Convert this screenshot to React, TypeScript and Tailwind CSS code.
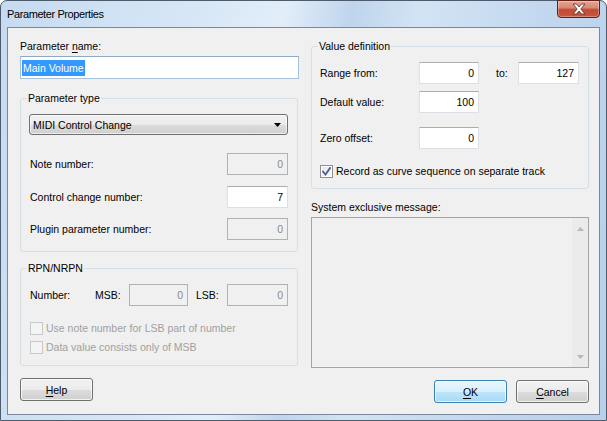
import React from "react";

function CloseButton() {
  return (
    <div className="-mt-[1px] w-[43px] h-[18px] rounded-b-[4px] border border-[#5e2219] bg-[linear-gradient(#e6a596_0%,#d98774_42%,#c24a33_55%,#c9573d_100%)] flex items-center justify-center shadow-[inset_0_0_0_1px_rgba(255,255,255,0.3)]">
      <svg width="16" height="12" viewBox="0 0 16 12">
        <path
          d="M2 1h3.5L8 4l2.5-3H14l-4.2 5L14 11h-3.5L8 8l-2.5 3H2l4.2-5z"
          fill="#ffffff"
          stroke="#5a3a36"
          strokeWidth="0.9"
          strokeLinejoin="round"
        />
      </svg>
    </div>
  );
}

function Field({ value, cls, disabled }: { value: string; cls: string; disabled?: boolean }) {
  return (
    <div
      className={
        "h-[22px] flex items-center justify-end pr-[4px] " +
        cls +
        (disabled
          ? " border border-[#adb2b5] bg-[#f0f0f0] text-[#8a8a8a]"
          : " border border-[#dbdfe6] border-t-[#abadb3] bg-white text-black")
      }
    >
      {value}
    </div>
  );
}

function Check({ label, checked, disabled }: { label: string; checked?: boolean; disabled?: boolean }) {
  return (
    <div className="flex items-center h-[14px]">
      {checked ? (
        <span className="w-[13px] h-[13px] border border-[#8e8f8f] bg-[linear-gradient(135deg,#e6e6e6,#fafafa)] shadow-[inset_0_0_0_1px_#ffffff] flex items-center justify-center">
          <svg width="9" height="9" viewBox="0 0 9 9">
            <path d="M1 4.5L3.5 7.5L8 1" fill="none" stroke="#4a5f97" strokeWidth="1.8" strokeLinecap="square" />
          </svg>
        </span>
      ) : (
        <span className="w-[13px] h-[13px] border border-[#c8c8c8] bg-[#f4f4f4]" />
      )}
      <span className={"ml-[3px] " + (disabled ? "text-[#a0a0a0]" : "text-black")}>{label}</span>
    </div>
  );
}

function Button({ children, primary, cls }: { children: React.ReactNode; primary?: boolean; cls: string }) {
  return (
    <div
      className={
        "h-[23px] rounded-[3px] border flex items-center justify-center shadow-[inset_0_0_0_1px_rgba(255,255,255,0.7)] " +
        cls +
        (primary
          ? " border-[#3c7fb1] bg-[linear-gradient(#eaf6fd_0%,#d9f0fc_50%,#bee6fd_50%,#a7d9f5_100%)]"
          : " border-[#707070] bg-[linear-gradient(#f2f2f2_0%,#ebebeb_50%,#dddddd_50%,#cfcfcf_100%)]")
      }
    >
      {children}
    </div>
  );
}

export default function App() {
  return (
    <div className="w-[607px] h-[421px] overflow-hidden font-['Liberation_Sans',Arial,sans-serif] text-[10.5px] leading-[14px] text-black">
      <div className="w-full h-full flex flex-col px-[6px] pb-[5px] border border-[#4d5b6c] rounded-t-[7px] bg-[linear-gradient(100deg,#c6dbf1_0%,#d6e6f6_28%,#e2edf9_42%,#bfd5ed_52%,#d2e3f4_62%,#c3d8ef_80%,#b8d0ea_100%)]">
        <div className="h-[26px] flex justify-between">
          <div className="pt-[6px] text-[11px] tracking-[-0.4px]">Parameter Properties</div>
          <CloseButton />
        </div>
        <div className="flex-1 bg-[#f0f0f0] border border-[#7b8899] flex pl-[12px] pr-[10px] pt-[11px] gap-[12px]">
          {/* Left column */}
          <div className="w-[279px] flex flex-col">
            <div>
              Parameter <span className="underline underline-offset-[2px]">n</span>ame:
            </div>
            <div className="mt-[3px] h-[23px] border border-[#a9c0da] border-t-[#8fa9c6] bg-white flex items-center pl-[1px]">
              <span className="bg-[#3399ff] text-white px-[1px] leading-[16px]">Main Volume</span>
            </div>

            <fieldset className="mt-[12px] w-[278px] border border-[#d5dfe5] rounded-[3px]">
              <legend className="ml-[6px] px-[1px] leading-[14px]">Parameter type</legend>
              <div className="pl-[8px] pr-[9px] pb-[11px] flex flex-col">
                <div className="mt-[9px] h-[21px] w-[259px] rounded-[3px] border border-[#707070] bg-[linear-gradient(#f2f2f2_0%,#ebebeb_50%,#dddddd_50%,#cfcfcf_100%)] shadow-[inset_0_0_0_1px_rgba(255,255,255,0.6)] flex items-center justify-between pl-[3px] pr-[6px]">
                  <span>MIDI Control Change</span>
                  <svg width="7" height="4" viewBox="0 0 7 4">
                    <path d="M0 0h7L3.5 4z" fill="#000" />
                  </svg>
                </div>
                <div className="mt-[18px] flex items-center justify-between pl-[1px]">
                  <span>Note number:</span>
                  <Field value="0" cls="w-[61px]" disabled />
                </div>
                <div className="mt-[11px] flex items-center justify-between pl-[1px]">
                  <span>Control change number:</span>
                  <Field value="7" cls="w-[61px]" />
                </div>
                <div className="mt-[10px] flex items-center justify-between pl-[1px]">
                  <span>Plugin parameter number:</span>
                  <Field value="0" cls="w-[61px]" disabled />
                </div>
              </div>
            </fieldset>

            <fieldset className="mt-[9px] w-[278px] border border-[#d5dfe5] rounded-[3px]">
              <legend className="ml-[6px] px-[1px] leading-[14px]">RPN/NRPN</legend>
              <div className="pl-[8px] pr-[9px] pb-[11px] flex flex-col">
                <div className="mt-[9px] flex items-center pl-[1px]">
                  <span className="w-[65px]">Number:</span>
                  <span className="w-[34px]">MSB:</span>
                  <Field value="0" cls="w-[59px]" disabled />
                  <span className="ml-[8px] w-[31px]">LSB:</span>
                  <Field value="0" cls="w-[61px]" disabled />
                </div>
                <div className="mt-[15px] pl-[1px]">
                  <Check label="Use note number for LSB part of number" disabled />
                </div>
                <div className="mt-[5px] pl-[1px]">
                  <Check label="Data value consists only of MSB" disabled />
                </div>
              </div>
            </fieldset>

            <div className="mt-[12px]">
              <Button cls="w-[73px]">
                <span>
                  <span className="underline underline-offset-[2px]">H</span>elp
                </span>
              </Button>
            </div>
          </div>

          {/* Right column */}
          <div className="w-[278px] flex flex-col">
            <fieldset className="w-[278px] border border-[#d5dfe5] rounded-[3px]">
              <legend className="ml-[6px] px-[1px] leading-[14px]">Value definition</legend>
              <div className="pl-[8px] pr-[9px] pb-[10px] flex flex-col">
                <div className="mt-[9px] flex items-center">
                  <span className="w-[99px]">Range from:</span>
                  <Field value="0" cls="w-[60px]" />
                  <span className="ml-[17px] w-[22px]">to:</span>
                  <Field value="127" cls="w-[61px]" />
                </div>
                <div className="mt-[7px] flex items-center">
                  <span className="w-[99px]">Default value:</span>
                  <Field value="100" cls="w-[60px]" />
                </div>
                <div className="mt-[14px] flex items-center">
                  <span className="w-[99px]">Zero offset:</span>
                  <Field value="0" cls="w-[60px]" />
                </div>
                <div className="mt-[15px]">
                  <Check label="Record as curve sequence on separate track" checked />
                </div>
              </div>
            </fieldset>

            <div className="mt-[11px]">System exclusive message:</div>
            <div className="mt-[3px] h-[151px] border border-[#a5a5a5] bg-[#f0f0f0] flex justify-end">
              <div className="w-[16px] h-full bg-[#ebebeb] flex flex-col justify-between items-center pt-[9px] pb-[8px]">
                <svg width="7" height="4" viewBox="0 0 7 4">
                  <path d="M0 4h7L3.5 0z" fill="#b8b8b8" />
                </svg>
                <svg width="7" height="4" viewBox="0 0 7 4">
                  <path d="M0 0h7L3.5 4z" fill="#b8b8b8" />
                </svg>
              </div>
            </div>

            <div className="mt-[12px] flex justify-end gap-[9px]">
              <Button cls="w-[73px]" primary>
                <span>
                  <span className="underline underline-offset-[2px]">O</span>K
                </span>
              </Button>
              <Button cls="w-[73px]">
                <span>
                  <span className="underline underline-offset-[2px]">C</span>ancel
                </span>
              </Button>
            </div>
          </div>
        </div>
      </div>
    </div>
  );
}
